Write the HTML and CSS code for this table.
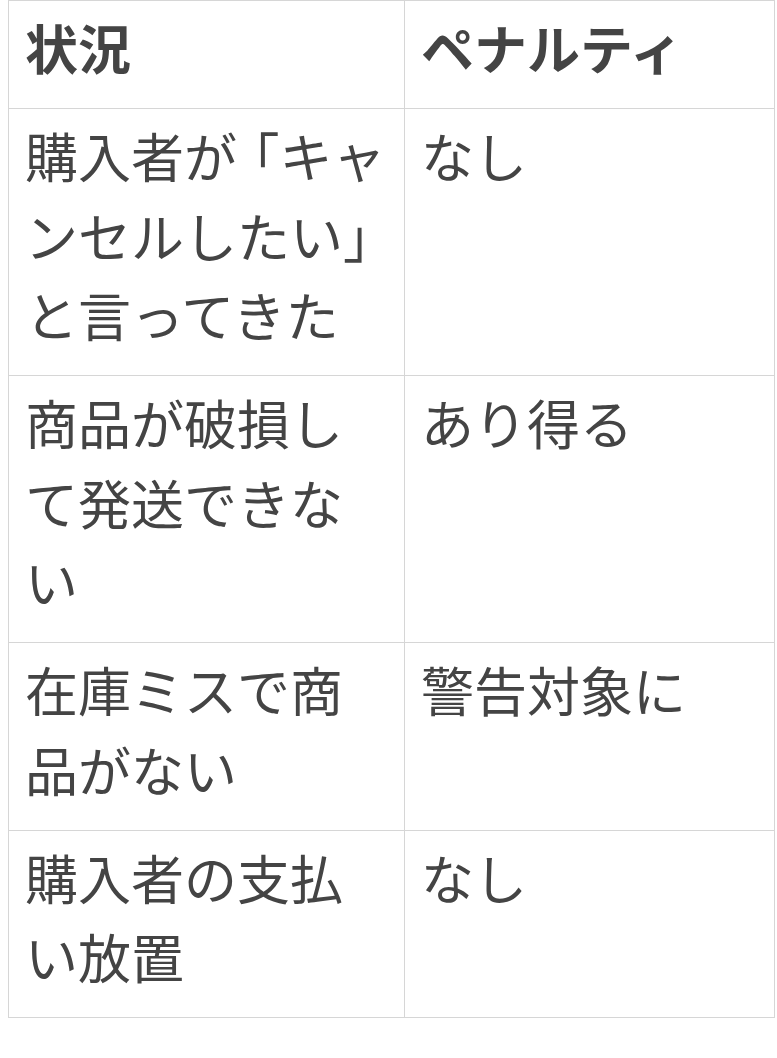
FILE: index.html
```html
<!DOCTYPE html>
<html lang="ja">
<head>
<meta charset="utf-8">
<link rel="stylesheet" href="styles.css">
</head>
<body>
<table class="penalty-table">
  <colgroup>
    <col class="col-situation">
    <col class="col-penalty">
  </colgroup>
  <thead>
    <tr>
      <th>状況</th>
      <th>ペナルティ</th>
    </tr>
  </thead>
  <tbody>
    <tr>
      <td>購入者が<span class="open">「</span>キャンセルしたい<span class="close">」</span>と言ってきた</td>
      <td>なし</td>
    </tr>
    <tr>
      <td>商品が破損して発送できない</td>
      <td>あり得る</td>
    </tr>
    <tr>
      <td>在庫ミスで商品がない</td>
      <td>警告対象に</td>
    </tr>
    <tr>
      <td>購入者の支払い放置</td>
      <td>なし</td>
    </tr>
  </tbody>
</table>
</body>
</html>
```

FILE: styles.css
```css
html, body {
  background: #ffffff;
}
body {
  margin: 0 0 0 8px;
  font-family: "Noto Sans CJK JP", "Noto Sans", sans-serif;
  color: #444444;
}
.penalty-table {
  border-collapse: collapse;
  table-layout: fixed;
  width: 766px;
  font-size: 53px;
  line-height: 79.5px;
}
.col-situation {
  width: 396px;
}
.col-penalty {
  width: 370px;
}
.penalty-table th,
.penalty-table td {
  border: 1px solid #d6d6d6;
  padding: 7px 16px 20.5px;
  text-align: left;
  vertical-align: top;
}
.penalty-table th {
  font-weight: 700;
}
.penalty-table td {
  font-weight: 400;
}
.open {
  font-feature-settings: "halt";
  padding-left: 0.3em;
}
.close {
  font-feature-settings: "halt";
}
```
